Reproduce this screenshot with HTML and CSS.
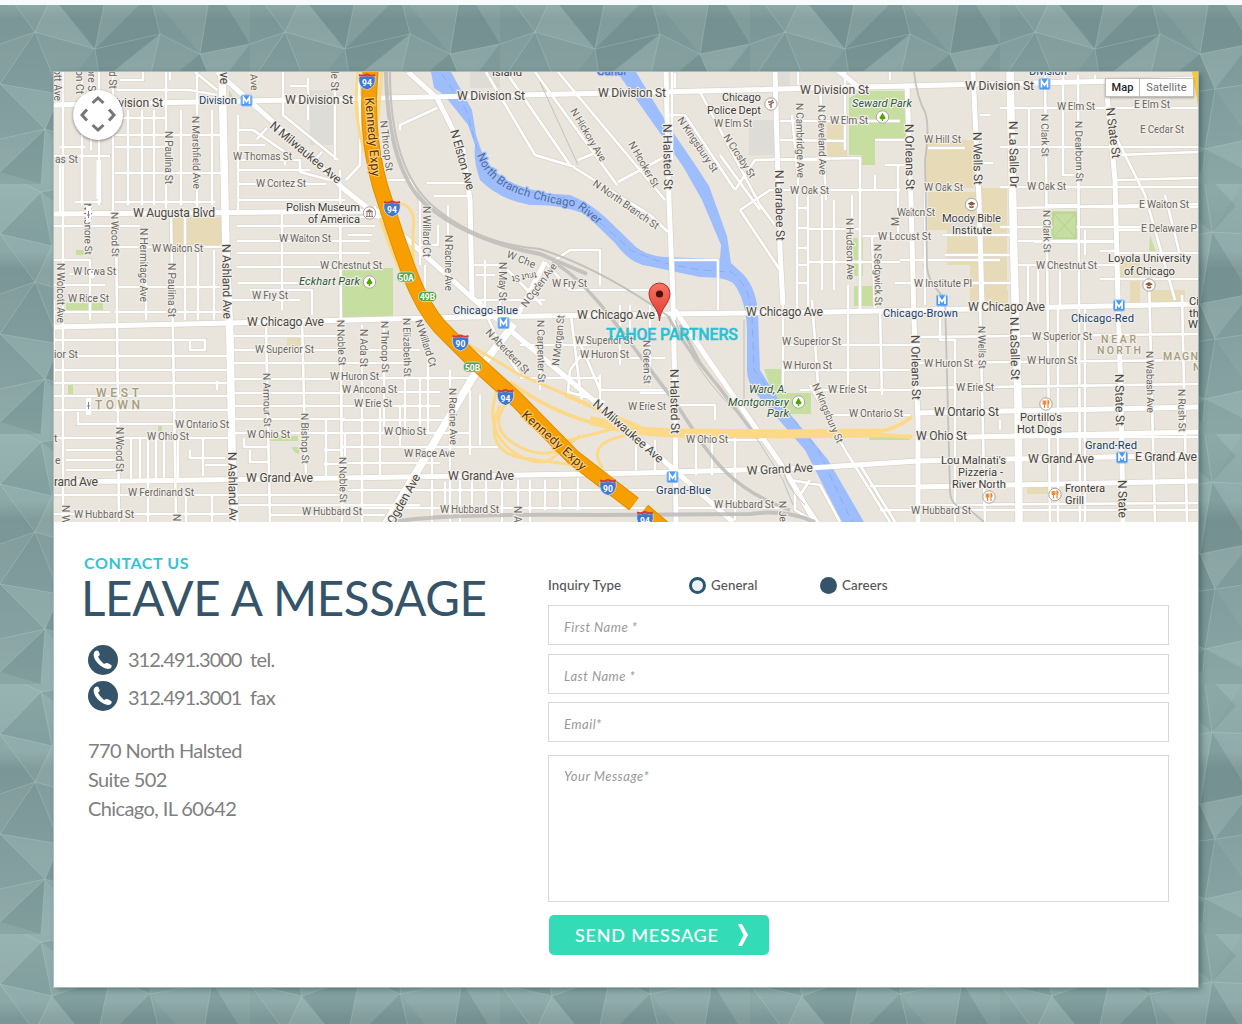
FILE: index.html
```html
<!DOCTYPE html>
<html lang="en">
<head>
<meta charset="utf-8">
<title>Contact Us</title>
<link rel="stylesheet" href="styles.css">
</head>
<body>
<svg class="backdrop" width="1242" height="1019" aria-hidden="true">
  <defs>
    <linearGradient id="wash" x1="0" y1="0" x2="0" y2="1"><stop offset="0" stop-color="#93b0af"/><stop offset=".27" stop-color="#8ba8a7"/><stop offset=".34" stop-color="#7b9696"/><stop offset=".7" stop-color="#829e9e"/><stop offset="1" stop-color="#8aa7a6"/></linearGradient>
    <pattern id="facets" width="250" height="250" patternUnits="userSpaceOnUse" patternTransform="translate(0 179)">
      <rect width="250" height="250" fill="url(#wash)"/>
      <g class="facet-light">
        <path d="M0-12 41 8 0 50ZM93 0 154 0 110 42ZM203-13 250-12 212 48ZM0 50 52 62 35 98ZM110 42 150 60 95 115ZM212 48 250 50 250 110ZM35 98 95 115 60 160ZM160 100 200 120 145 165ZM0 110 0 150 35 98ZM60 160 100 148 105 212ZM215 155 250 150 250 205ZM45 195 105 212 93 250ZM165 198 205 215 154 250ZM0 205 45 195 0 238ZM145 165 165 198 105 212ZM150 60 212 48 200 120Z"/>
      </g>
      <g class="facet-bright">
        <path d="M154 0 203-13 165 20ZM93 0 110 42 70 30ZM52 62 95 115 35 98ZM250 110 200 120 215 155ZM0 150 60 160 45 195ZM205 215 250 205 250 238ZM41 258 93 250 45 195ZM100 148 160 100 145 165Z"/>
      </g>
      <g class="facet-dark">
        <path d="M41 8 93 0 70 30ZM154 0 203-13 236 22 212 48ZM0 50 41 8 52 62ZM110 42 154 0 150 60ZM52 62 110 42 95 115ZM150 60 160 100 95 115ZM212 48 250 110 200 120ZM95 115 160 100 100 148ZM200 120 215 155 145 165ZM60 160 105 212 45 195ZM145 165 215 155 205 215 165 198ZM105 212 165 198 154 250ZM205 215 203 237 154 250ZM0 238 45 195 41 250Z"/>
      </g>
      <path class="facet-lines" d="M0-12 41 8 93 0 154 0 203-13 250-12M0 50 52 62 110 42 150 60 212 48 250 50M0 110 35 98 95 115 160 100 200 120 250 110M0 150 60 160 100 148 145 165 215 155 250 150M0 205 45 195 105 212 165 198 205 215 250 205M41 8 52 62 35 98 60 160 45 195 41 250M93 0 110 42 95 115 100 148 105 212 93 250M154 0 150 60 160 100 145 165 165 198 154 250M203-13 212 48 200 120 215 155 205 215 203 237M41 8 0 50 35 98 0 150 45 195 0 238"/>
    </pattern>
  </defs>
  <rect width="1242" height="1019" fill="url(#facets)"/>
</svg>

<main class="card">
  <section class="map">
    <svg class="map-canvas" viewBox="54 72 1144 450" width="1144" height="450" role="img" aria-label="Street map of Chicago around North Halsted Street">
      <defs>
        <g id="metro"><rect x="-5.5" y="-5.5" width="11" height="11" rx="1.5" fill="#4f97f0" stroke="#8dbdf7"/><path d="M-3 3.6V-3.2L0 1.2 3-3.2V3.6" fill="none" stroke="#fff" stroke-width="1.7"/></g>
        <g id="shield"><path d="M-8-6Q-4-4.500 0-6.500 4-4.500 8-6 10 5 0 8-10 5-8-6Z" fill="#3f78cf" stroke="#fff" stroke-width=".6"/><path d="M-8-7Q-4-5.500 0-7.500 4-5.500 8-7" fill="none" stroke="#cf3c45" stroke-width="2"/></g>
        <g id="exit"><rect x="-9" y="-5" width="18" height="10" rx="4.500" fill="#5ba348" stroke="#d9e8d0" stroke-width=".7"/></g>
        <g id="spot"><circle r="6.200" fill="#fff" stroke="#aaa59c"/></g>
        <g id="tree"><use href="#spot"/><path d="M0-4.200 3 .8Q3 2.500.7 2.300V4H-.7V2.300Q-3 2.500-3 .8Z" fill="#55a300"/></g>
        <g id="food"><use href="#spot"/><path d="M-2.800-3.500V0H-.2V-3.500M-1.500-3.500V4M2 4V-3.500Q4-2 2 .5" fill="none" stroke="#f0852d" stroke-width="1.200"/></g>
        <g id="school"><use href="#spot"/><path d="M-4-.8 0-3 4-.8 0 1.300ZM-2.200 1V3Q0 4.200 2.200 3V1L0 2.200Z" fill="#8b5a3c"/></g>

        <path id="minor-streets" d="M63 72V522M82 72V205M91 72V150M99 72V205M113 72V212M116 212 119 522M128 110V205M142 110V205M154 110V205M166 72V214M171 214 176 522M181 110V205M197 72V214M212 110V205M238 115V212M146 230V320M185 215V320M198 250V320M214 250V320M120 80H143V72M117 90H190L217 95M170 80V72M195 72 217 90M60 147H85M54 156H110M60 160V214M75 202H100V173M115 118H165M115 135H222M115 173H222M115 202H215M115 147H165M54 226H140M117 247H222M54 260H90V320M70 274H118M118 287H220M54 285H105M54 312H110M115 312H222M250 290H312V315M230 300H300M54 340H205V350H190V340M54 356H228M54 370H228M54 383H228M54 396H228M54 410H228M78 412V424H228M54 438H228M66 450H120M66 460H120M66 470H120M131 438V478M140 438V478M148 438V478M156 438V478M164 438V478M178 438V478M203 438V476M190 450V458H225M205 465H228M54 495H228M54 514H228M148 482V522M212 495V522M186 490V522M217 381V390M266 326 270 522M302 322 306 477M340 170 342 522M326 420V476M233 336H345M233 350H345M233 363H345M233 379H345M233 393H345M233 406H345M233 419H345M233 433H470M244 438V447H268M250 450V462H268M324 450H342M324 464H342M232 495H342M232 505H420M270 515H385M238 130H253L285 152V165M237 145H265M237 160H300V172L330 180H338M238 170H310M237 184H326M238 200H345M237 226H375M237 241H370M237 253H370M237 267H378M238 283H310M282 211V310M283 72V115L338 160M308 78V120M335 72V160M267 128 257 139M322 152 313 162M290 86H308M54 380V300M362 325V522M384 325V433M405 325V430M428 345V433M450 370V522M362 350H420M342 363H410M342 378H470M342 392H440M342 406H440M342 420H450M342 447H500M342 463H440M345 433V475M380 400V475M400 406V447M420 378V433M432 455V478M470 390V455M480 395V445M348 490H655M342 508H645M432 480V522M445 482V508M460 480V522M472 480V508M486 480V510M502 480V522M518 480V510M530 480V522M545 480V510M560 480V510M578 478V510M480 300 500 345 522 378H530M540 325V390M520 345H590M520 378H600M562 315V347M571 315 582 405M585 350 570 370 568 392 605 402M600 375V405M580 343 600 390H670M470 265H500V315M476 300H545M500 262 542 305M485 260V315M476 275H495M552 262 570 250H600V285M545 262 570 290H650M348 235H372M346 217H375V206M346 180 360 165V110L358 72M380 180H410L420 200V265M425 265V310M448 205V290M438 225V245H420M427 183H465M434 196H470M400 130V125L437 108M486 72 535 155 575 167M506 72 570 165 650 215 668 232M535 72 617 185M558 72 665 200M578 160 602 150M618 182 668 155M630 305V330M650 305V385M620 305V365M640 393H668M580 358H665M636 438V470M655 440V470M696 438V475M712 438V475M735 435V475M675 405H715V420M700 440H765M675 508H790M735 440V520M673 285V260H718V310M672 160V72M675 73V88M700 92 760 205 775 225M670 115H685L735 190M735 190 755 160 860 158V310M740 210 780 270M740 210 770 190H900M720 155 760 210M792 115 798 178V195M820 85 826 200M845 95V150M797 195V310M808 195V310M798 208H809M798 228H809M798 248H809M798 265H809M798 283H809M822 190V290M834 200V290M808 229H860M808 262H900M826 190V195M852 195V230M875 175V190M885 165H910M898 165V235M863 236H920M872 236 875 308M848 310V285M780 140 845 141M780 121H900M875 140H912M890 80V72M845 72V85M798 72V85M900 260H1000M895 283H1015M925 190V305M945 255H1015M943 235H1015M940 305V340L955 340V522M980 300 985 522M928 148H965M925 230V260M980 115H990M980 163H993M1000 108H1198M1000 147H1198M1000 187H1198M1000 227H1145M1015 265H1115M1015 208 1198 204M1018 241H1115M1034 242H1115M1045 72 1050 522M1078 75 1080 522M1029 108V185M1063 72V175H1075M1045 205H1078M1095 75V80M1110 125 1145 195 1175 300M1118 155 1198 152M1115 180 1198 178M1118 207H1198M1118 230H1198M1118 253H1198M1100 279H1198M1165 195 1180 255M1028 265V305M1038 265V305M1060 265V305M1085 230V255M1100 251H1115M1149 280 1155 522M1182 295 1187 522M783 305V390M812 300 818 385M848 305V390M880 310 882 395M782 345H920M782 370H920M800 390H920M830 415H910M810 385 845 450 890 522M860 465 895 522M870 486H918M880 510H1198M790 480 820 485 840 522M810 480 800 495 818 522M795 485V510L815 522M918 337 1198 334M918 363 1198 360M918 388 1198 384M918 437H1198M918 505 1198 503M1000 420V430M1058 307V522M1085 307V522"/>
        <path id="avenues" d="M54 105 290 100 660 92 1198 79M54 214 380 211M54 327 230 323 470 317 670 314 830 312 1198 304M54 482 340 478 640 473 810 468 918 461 1198 455M918 413 1198 407M968 437 1198 432M918 487 1198 481M666 72 669 200 673 300 675 400 676 522M775 72 780 250 783 305M907 85 911 200 914 320 918 420V522M973 72 979 200 982 305M1107 95 1115 180 1118 300 1121 400 1123 522M217 72 271 120 345 190 407 239 470 296 510 330 593 400 663 460 733 522M408 72 437 98 463 150 470 200 472 296M545 262 516 318M835 68 862 90M675 310 705 355 785 470 815 522"/>
        <path id="boulevards" d="M222 72 226 250 230 340 232 450 235 522M385 525 473 377 514 324M1010 72 1014 260 1018 400 1019 522"/>
        <path id="expressway" d="M371 66C367 110 369 145 380 186L393 226C408 270 420 310 448 335L473 360 517 400 573 457Q605 482 634 504M643 511 668 532"/>
      </defs>
      <rect x="54" y="72" width="1144" height="450" fill="#e9e5dc"/>

      <g class="land-tan">
        <path d="M173 217H222V246H173ZM926 140H974V188H926ZM980 188H1007V305H970V265H947V230H928V192H980ZM827 123H847V156H827ZM984 290H1008V304H984ZM1120 261H1140V305H1130V280H1120ZM1150 290H1185V303H1150ZM287 338H300V346H287ZM1027 487H1050V494H1027Z"/>
      </g>
      <g class="land-grey"><path d="M749 120H777V155H749ZM310 90H336V145H310ZM470 72H500V88H470ZM950 215H990V235H950ZM775 72H790V88H775Z"/></g>
      <g class="land-green">
        <path d="M341 268H393V317H341ZM849 98 862 91H908V138H875V165H862V155H849ZM853 238H863V276H853ZM854 286H875V306H854ZM1051 211H1078V240H1051ZM764 369H781V393H811V414H780ZM66 303H103V310H66ZM102 154H111V157H102ZM68 384H73V394H68ZM158 425H162V431H158ZM270 436H298V441H270ZM292 447H299V454Q293 453 292 447ZM76 250H84V255H76ZM1150 235 1156 252H1149ZM869 437H910V440H869ZM229 90 233 97H229Z"/>
      </g>

      <g class="casing">
        <use href="#minor-streets" stroke-width="4.200"/>
        <use href="#avenues" stroke-width="6.500"/>
        <use href="#boulevards" stroke-width="9"/>
      </g>

      <g class="water">
        <path d="M431 72H451L472 110 476 135 483 155Q492 174 515 184T570 195Q590 203 605 217L636 247Q648 256 664 257L720 259 721 245 702 200 684 168 660 133 617 72H636L668 125 694 163 709 186 727 236 731 263 744 275Q757 290 758 315L760 370 782 405 812 440 828 460 864 522H842L805 450 760 398Q747 385 747 370V330Q746 300 734 284 727 277 700 277L648 266Q630 264 615 243L585 214Q560 204 530 205 500 200 480 180 473 160 475 145L468 125 449 101 440 92 434 88Z"/>
        <path class="channel" d="M442 74 466 110 477 148Q490 176 520 190L575 200 632 251 664 263 700 270 731 272Q750 285 752 315L754 370 790 415 818 450 852 522"/>
      </g>

      <g class="streets">
        <use href="#minor-streets" stroke-width="2.600"/>
        <use href="#avenues" stroke-width="5"/>
        <use href="#boulevards" stroke-width="7.600"/>
      </g>
      <path d="M1053 213V238H1076V213ZM1053 213 1076 238M1076 213 1053 238" stroke="#b2ce91" fill="#c6dfa0"/>

      <g class="rails">
        <path stroke-width="4" d="M386 72Q388 175 430 208T540 254L587 274"/>
        <path stroke-width="2" d="M390 72Q390 170 434 207T540 249Q600 268 668 316"/>
        <path stroke-width="3.500" d="M552 262C590 280 630 345 675 402 710 455 725 487 790 510"/>
        <path stroke-width="4" d="M385 524Q420 513 600 515L750 514Q785 509 815 522"/>
        <path stroke-width="3" d="M668 316Q685 348 720 388L755 435M680 325 700 363 740 415"/>
        <path stroke-width="1" d="M675 320Q695 375 745 420L783 480 793 505M744 320V400M540 82 578 165M785 465Q780 480 805 505"/>
        <path stroke-width="1.800" d="M914 72Q917 98 925 112 930 126 925 160L927 266Q928 283 945 298L950 490Q950 508 970 510L984 522"/>
      </g>

      <g class="ramps">
        <path stroke-width="3" d="M358 72Q351 122 370 165M382 72 378 120M390 202Q418 202 413 230V262M380 218Q395 265 415 300M466 343 520 375 590 405M440 335 495 375Q497 390 512 397M500 382Q480 430 515 453T565 441L625 426M505 405Q487 430 520 447T580 435M500 405Q480 455 530 459L574 465M603 468Q582 440 640 433"/>
        <path stroke-width="9" d="M590 420Q630 432 670 433L780 434 880 433"/>
        <path stroke-width="4" d="M565 395Q610 415 640 427M510 382Q560 420 625 430M870 434 912 437M875 432Q895 430 912 417"/>
      </g>
      <path d="M1192 72H1198V105Z" fill="#f7c938"/>
      <g fill="none"><use href="#expressway" stroke="#e08f00" stroke-width="16"/><use href="#expressway" stroke="#f79f00" stroke-width="14"/></g>

      <g class="label minor">
        <text x="233" y="160" textLength="59">W Thomas St</text>
        <text x="256" y="187" textLength="50">W Cortez St</text>
        <text x="152" y="252" textLength="51">W Walton St</text>
        <text x="279" y="242" textLength="52">W Walton St</text>
        <text x="320" y="269" textLength="62">W Chestnut St</text>
        <text x="73" y="275" textLength="43">W Iowa St</text>
        <text x="68" y="302" textLength="41">W Rice St</text>
        <text x="55" y="163">as St</text>
        <text x="252" y="299" textLength="36">W Fry St</text>
        <text x="54" y="358">ior St</text>
        <text x="255" y="353" textLength="59">W Superior St</text>
        <text x="175" y="428" textLength="54">W Ontario St</text>
        <text x="147" y="440" textLength="42">W Ohio St</text>
        <text x="247" y="438" textLength="43">W Ohio St</text>
        <text x="128" y="496" textLength="66">W Ferdinand St</text>
        <text x="74" y="518" textLength="60">W Hubbard St</text>
        <text x="302" y="515" textLength="60">W Hubbard St</text>
        <text x="55" y="464">e</text><text x="54" y="442">t</text>
        <text x="552" y="287" textLength="35">W Fry St</text>
        <text x="575" y="344" textLength="58">W Superior St</text>
        <text x="580" y="358" textLength="49">W Huron St</text>
        <text x="330" y="380" textLength="49">W Huron St</text>
        <text x="342" y="393" textLength="55">W Ancona St</text>
        <text x="354" y="407" textLength="38">W Erie St</text>
        <text x="384" y="435" textLength="42">W Ohio St</text>
        <text x="404" y="457" textLength="51">W Race Ave</text>
        <text x="440" y="513" textLength="59">W Hubbard St</text>
        <text x="628" y="410" textLength="38">W Erie St</text>
        <text x="686" y="443" textLength="42">W Ohio St</text>
        <text x="782" y="345" textLength="59">W Superior St</text>
        <text x="783" y="369" textLength="49">W Huron St</text>
        <text x="828" y="393" textLength="39">W Erie St</text>
        <text x="849" y="417" textLength="54">W Ontario St</text>
        <text x="714" y="508" textLength="60">W Hubbard St</text>
        <text x="714" y="127" textLength="38">W Elm St</text>
        <text x="830" y="124" textLength="38">W Elm St</text>
        <text x="790" y="194" textLength="39">W Oak St</text>
        <text x="897" y="216" textLength="38">Walton St</text>
        <text x="878" y="240" textLength="53">W Locust St</text>
        <text x="1057" y="110" textLength="38">W Elm St</text>
        <text x="1134" y="108" textLength="36">E Elm St</text>
        <text x="1140" y="133" textLength="44">E Cedar St</text>
        <text x="924" y="143" textLength="37">W Hill St</text>
        <text x="924" y="191" textLength="39">W Oak St</text>
        <text x="1027" y="190" textLength="39">W Oak St</text>
        <text x="1139" y="208" textLength="50">E Walton St</text>
        <text x="1141" y="232" textLength="56">E Delaware P</text>
        <text x="1036" y="269" textLength="61">W Chestnut St</text>
        <text x="914" y="287" textLength="58">W Institute Pl</text>
        <text x="1032" y="340" textLength="60">W Superior St</text>
        <text x="924" y="367" textLength="49">W Huron St</text>
        <text x="1027" y="364" textLength="50">W Huron St</text>
        <text x="956" y="391" textLength="38">W Erie St</text>
        <text x="911" y="514" textLength="60">W Hubbard St</text>

        <text transform="translate(165 131)rotate(90)" textLength="53">N Paulina St</text>
        <text transform="translate(192 116)rotate(89)" textLength="73">N Marshfield Ave</text>
        <text transform="translate(140 228)rotate(90)" textLength="74">N Hermitage Ave</text>
        <text transform="translate(111 212)rotate(89)" textLength="45">N Wood St</text>
        <text transform="translate(168 263)rotate(90)" textLength="54">N Paulina St</text>
        <text transform="translate(57 263)rotate(90)" textLength="60">N Wolcott Ave</text>
        <text transform="translate(84 203)rotate(89)" textLength="52">N Honore St</text>
        <text transform="translate(54 69)rotate(90)">ott Ave</text>
        <text transform="translate(76 70)rotate(90)">on Ct</text>
        <text transform="translate(88 68)rotate(90)">ore St</text>
        <text transform="translate(109 71)rotate(90)">d St</text>
        <text transform="translate(250 74)rotate(86)">Ave</text>
        <text transform="translate(331 71)rotate(90)">le St</text>
        <text transform="translate(337 320)rotate(88)" textLength="46">N Noble St</text>
        <text transform="translate(263 373)rotate(89)" textLength="54">N Armour St</text>
        <text transform="translate(301 413)rotate(89)" textLength="51">N Bishop St</text>
        <text transform="translate(116 427)rotate(90)" textLength="45">N Wood St</text>
        <text transform="translate(339 457)rotate(89)" textLength="46">N Noble St</text>
        <text transform="translate(62 505)rotate(90)">N W</text><text transform="translate(173 514)rotate(90)">N</text>
        <text transform="translate(380 121)rotate(83)" textLength="51">N Throop St</text>
        <text transform="translate(423 206)rotate(90)" textLength="51">N Willard Ct</text>
        <text transform="translate(445 235)rotate(90)" textLength="56">N Racine Ave</text>
        <text transform="translate(499 262)rotate(90)" textLength="39">N May St</text>
        <text transform="translate(570 111)rotate(59)" textLength="60">N Hickory Ave</text>
        <text transform="translate(628 144)rotate(60)" textLength="51">N Hooker St</text>
        <text transform="translate(592 185)rotate(35)" textLength="78">N North Branch St</text>
        <text transform="translate(506 257)rotate(22)" textLength="30">W Che</text>
        <text transform="translate(536 272)rotate(170)" textLength="25" class="turned">tnut St</text>
        <text transform="translate(526 308)rotate(-53)" textLength="52">N Ogden Ave</text>
        <text transform="translate(485 333)rotate(46)" textLength="58">N Aberdeen St</text>
        <text transform="translate(537 320)rotate(89)" textLength="63">N Carpenter St</text>
        <text transform="translate(559 366)rotate(-84)" textLength="51">N Morgan St</text>
        <text transform="translate(360 329)rotate(90)" textLength="38">N Ada St</text>
        <text transform="translate(381 321)rotate(89)" textLength="52">N Throop St</text>
        <text transform="translate(403 318)rotate(89)" textLength="59">N Elizabeth St</text>
        <text transform="translate(415 321)rotate(72)" textLength="49">N Willard Ct</text>
        <text transform="translate(449 388)rotate(89)" textLength="57">N Racine Ave</text>
        <text transform="translate(514 506)rotate(90)">N A</text>
        <text transform="translate(643 340)rotate(89)" textLength="44">N Green St</text>
        <text transform="translate(812 385)rotate(67)" textLength="64">N Kingsbury St</text>
        <text transform="translate(779 501)rotate(88)">N Je</text>
        <text transform="translate(677 120)rotate(56)" textLength="64">N Kingsbury St</text>
        <text transform="translate(723 137)rotate(57)" textLength="50">N Crosby St</text>
        <text transform="translate(796 103)rotate(89)" textLength="75">N Cambridge Ave</text>
        <text transform="translate(818 105)rotate(89)" textLength="70">N Cleveland Ave</text>
        <text transform="translate(846 218)rotate(89)" textLength="62">N Hudson Ave</text>
        <text transform="translate(874 244)rotate(89)" textLength="62">N Sedgwick St</text>
        <text transform="translate(899 226)rotate(-90)">M</text>
        <text transform="translate(1041 114)rotate(89)" textLength="43">N Clark St</text>
        <text transform="translate(1075 121)rotate(89)" textLength="61">N Dearborn St</text>
        <text transform="translate(1043 210)rotate(89)" textLength="43">N Clark St</text>
        <text transform="translate(978 326)rotate(89)" textLength="43">N Wells St</text>
        <text transform="translate(1146 351)rotate(89)" textLength="62">N Wabash Ave</text>
        <text transform="translate(1178 389)rotate(89)" textLength="43">N Rush St</text>
      </g>

      <g class="label major">
        <text x="94" y="107" textLength="69">W Division St</text>
        <text x="285" y="104" textLength="68">W Division St</text>
        <text x="457" y="100" textLength="68">W Division St</text>
        <text x="598" y="97" textLength="68">W Division St</text>
        <text x="800" y="94" textLength="69">W Division St</text>
        <text x="965" y="90" textLength="69">W Division St</text>
        <text x="133" y="217" textLength="82">W Augusta Blvd</text>
        <text x="247" y="326" textLength="77">W Chicago Ave</text>
        <text x="577" y="319" textLength="78">W Chicago Ave</text>
        <text x="746" y="316" textLength="77">W Chicago Ave</text>
        <text x="968" y="311" textLength="77">W Chicago Ave</text>
        <text x="246" y="482" textLength="67">W Grand Ave</text>
        <text x="54" y="486" textLength="44">rand Ave</text>
        <text x="448" y="480" textLength="66">W Grand Ave</text>
        <text transform="translate(747 475)rotate(-3)" textLength="66">W Grand Ave</text>
        <text x="1028" y="463" textLength="66">W Grand Ave</text>
        <text x="1135" y="461" textLength="62">E Grand Ave</text>
        <text x="934" y="416" textLength="65">W Ontario St</text>
        <text x="916" y="440" textLength="51">W Ohio St</text>
        <text transform="translate(269 127)rotate(40)" textLength="89">N Milwaukee Ave</text>
        <text transform="translate(592 405)rotate(41)" textLength="89">N Milwaukee Ave</text>
        <text transform="translate(222 244)rotate(89)" textLength="75">N Ashland Ave</text>
        <text transform="translate(228 452)rotate(89)" textLength="69">N Ashland Av</text>
        <text transform="translate(220 72)rotate(90)">ve</text>
        <text transform="translate(450 131)rotate(74)" textLength="62">N Elston Ave</text>
        <text transform="translate(394 525)rotate(-61)" textLength="55">Ogden Ave</text>
        <text transform="translate(663 124)rotate(89)" textLength="66">N Halsted St</text>
        <text transform="translate(670 369)rotate(89)" textLength="65">N Halsted St</text>
        <text transform="translate(775 170)rotate(89)" textLength="71">N Larrabee St</text>
        <text transform="translate(905 124)rotate(89)" textLength="66">N Orleans St</text>
        <text transform="translate(911 335)rotate(89)" textLength="65">N Orleans St</text>
        <text transform="translate(973 132)rotate(89)" textLength="53">N Wells St</text>
        <text transform="translate(1009 121)rotate(89)" textLength="67">N La Salle Dr</text>
        <text transform="translate(1010 317)rotate(89)" textLength="63">N LaSalle St</text>
        <text transform="translate(1106 108)rotate(83)" textLength="51">N State St</text>
        <text transform="translate(1115 374)rotate(89)" textLength="52">N State St</text>
        <text transform="translate(1118 480)rotate(89)" textLength="38">N State</text>
      </g>

      <g class="label expy">
        <text transform="translate(365 98)rotate(85)" textLength="79">Kennedy Expy</text>
        <text transform="translate(521 416)rotate(42)" textLength="82">Kennedy Expy</text>
      </g>
      <g class="label river">
        <path id="river-line" d="M477 155Q487 185 525 196T575 206L606 231" fill="none" stroke="none"/>
        <text textLength="146"><textPath href="#river-line">North Branch Chicago River</textPath></text>
        <text x="597" y="75">Canal</text>
      </g>

      <g class="label place">
        <text x="286" y="211" textLength="74">Polish Museum</text><text x="308" y="223" textLength="52">of America</text>
        <text x="722" y="101" textLength="39">Chicago</text><text x="707" y="114" textLength="54">Police Dept</text>
        <text x="942" y="222" textLength="59">Moody Bible</text><text x="952" y="234" textLength="40">Institute</text>
        <text x="1108" y="262" textLength="83">Loyola University</text><text x="1124" y="275" textLength="51">of Chicago</text>
        <text x="1020" y="421" textLength="42">Portillo's</text><text x="1017" y="433" textLength="45">Hot Dogs</text>
        <text x="941" y="464" textLength="65">Lou Malnati's</text><text x="958" y="476" textLength="45">Pizzeria -</text><text x="952" y="488" textLength="54">River North</text>
        <text x="1065" y="492" textLength="40">Frontera</text><text x="1065" y="504" textLength="19">Grill</text>
        <text x="1189" y="305">Ci</text><text x="1189" y="317">th</text><text x="1188" y="328">W</text>
        <text x="492" y="76">Island</text>
      </g>
      <g class="label park">
        <text x="299" y="285" textLength="61">Eckhart Park</text>
        <text x="852" y="107" textLength="60">Seward Park</text>
        <text x="749" y="393" textLength="38">Ward, A.</text><text x="728" y="406" textLength="61">Montgomery</text><text x="767" y="417" textLength="22">Park</text>
      </g>
      <g class="label station">
        <text x="199" y="104" textLength="38">Division</text><text x="453" y="314" textLength="65">Chicago-Blue</text>
        <text x="656" y="494" textLength="55">Grand-Blue</text><text x="883" y="317" textLength="75">Chicago-Brown</text>
        <text x="1071" y="322" textLength="63">Chicago-Red</text><text x="1085" y="449" textLength="52">Grand-Red</text>
        <text x="1029" y="75" textLength="38">Division</text>
      </g>
      <g class="label district">
        <text x="96" y="397" textLength="43">WEST</text><text x="95" y="409" textLength="45">TOWN</text>
        <text class="small" x="1101" y="343" textLength="35">NEAR</text><text class="small" x="1097" y="354" textLength="44">NORTH</text>
        <text class="small" x="1163" y="360" textLength="35">MAGN</text><text class="small" x="1193" y="371">N</text>
      </g>

      <use href="#metro" x="246.500" y="100.500"/><use href="#metro" x="503.500" y="323"/><use href="#metro" x="672.500" y="477"/><use href="#metro" x="942" y="300.500"/><use href="#metro" x="1119" y="305.500"/><use href="#metro" x="1122" y="457.500"/><use href="#metro" x="1044.500" y="84"/>
      <use href="#tree" x="369.500" y="282"/><use href="#tree" x="882.500" y="117"/><use href="#tree" x="798.500" y="402"/>
      <use href="#food" x="1046" y="404"/><use href="#food" x="989" y="497"/><use href="#food" x="1055" y="494.500"/>
      <use href="#school" x="971.500" y="204.500"/><use href="#school" x="1149" y="285"/>
      <use href="#spot" x="369.500" y="213"/><path d="M366 212 369.500 209.500 373 212ZM367 213V216M369.500 213V216M372 213V216M366 216.500H373" stroke="#8d7464" fill="#8d7464" stroke-width=".9"/>
      <use href="#spot" x="771" y="104"/><path d="M768 102H771L773 100M769 105 774 102M771 104V108" stroke="#8d6450" fill="none" stroke-width="1.400"/>
      <use href="#shield" x="367" y="82"/><use href="#shield" x="392" y="209"/><use href="#shield" x="460.500" y="343"/><use href="#shield" x="505.500" y="397.500"/><use href="#shield" x="608" y="487.500"/><use href="#shield" x="645" y="519.500"/>
      <use href="#exit" x="406" y="277"/><use href="#exit" x="427.500" y="296.500"/><use href="#exit" x="472.500" y="367"/>
      <g class="badge"><text x="367" y="86">94</text><text x="392" y="213">94</text><text x="460.500" y="347">90</text><text x="505.500" y="401.500">94</text><text x="608" y="491.500">90</text><text x="645" y="523.500">94</text><text x="406" y="280.500">50A</text><text x="427.500" y="300">49B</text><text x="472.500" y="370.500">50B</text></g>

      <g class="worn"><path d="M96.500 160H101V199H96.500ZM86 206H91V222H86ZM89 270H94V278H89ZM86 398H91V415H86Z" fill="#fff"/><path d="M88.500 211V218M87 215H90M91 272H93M88.500 402V409M87 406H90" stroke="#7d8297" fill="none"/></g>

      <defs><linearGradient id="pin-fill" x1="0" y1="0" x2="0" y2="1"><stop offset="0" stop-color="#fb7064"/><stop offset="1" stop-color="#dd3c30"/></linearGradient></defs>
      <path d="M659.500 321C659 308 649 304 649 293.500A10.500 10.500 0 0 1 670 293.500C670 304 660 308 659.500 321Z" fill="url(#pin-fill)" stroke="#ab3027"/>
      <circle cx="659.500" cy="294" r="3.600" fill="#49120e"/>
      <text class="partner" x="606" y="340" textLength="132">TAHOE PARTNERS</text>
    </svg>

    <button class="pan" aria-label="Pan map">
      <svg viewBox="0 0 50 50" width="50" height="50"><path d="M19.500 13 25 8 30.500 13M19.500 35 25 40 30.500 35M14 19.500 9 25 14 30.500M36 19.500 41 25 36 30.500"/></svg>
    </button>
    <div class="map-type"><span class="active">Map</span><span>Satellite</span></div>
  </section>

  <section class="contact">
    <div class="details">
      <p class="eyebrow">CONTACT US</p>
      <h1>LEAVE A MESSAGE</h1>
      <ul class="phones">
        <li><svg class="phone" viewBox="0 0 30 30"><circle cx="15" cy="15" r="15"/><path d="M7 6.200Q9.500 4.400 10.700 6.600L11.800 9.600Q11.500 11.300 10 11.500 11.500 15.500 16 19 18.800 17 20.600 18.600L23.500 20.200Q24.400 21.800 22.700 23.300 18.500 25.400 12.500 20.800 5.500 15 5.600 9.500 5.700 7.500 7 6.200Z"/></svg><span class="number">312.491.3000</span><span>tel.</span></li>
        <li><svg class="phone" viewBox="0 0 30 30"><circle cx="15" cy="15" r="15"/><path d="M7 6.200Q9.500 4.400 10.700 6.600L11.800 9.600Q11.500 11.300 10 11.500 11.500 15.500 16 19 18.800 17 20.600 18.600L23.500 20.200Q24.400 21.800 22.700 23.300 18.500 25.400 12.500 20.800 5.500 15 5.600 9.500 5.700 7.500 7 6.200Z"/></svg><span class="number">312.491.3001</span><span>fax</span></li>
      </ul>
      <address>770 North Halsted<br>Suite 502<br>Chicago, IL 60642</address>
    </div>

    <form class="message">
      <div class="inquiry">
        <span class="inquiry-title">Inquiry Type</span>
        <label class="choice general"><i class="dot hollow"></i>General</label>
        <label class="choice"><i class="dot"></i>Careers</label>
      </div>
      <input class="field" type="text" placeholder="First Name *">
      <input class="field" type="text" placeholder="Last Name *">
      <input class="field" type="text" placeholder="Email*">
      <textarea class="field area" placeholder="Your Message*"></textarea>
      <button class="send" type="button"><span>SEND MESSAGE</span><svg viewBox="0 0 10 22" width="10" height="22"><path d="M0 0H4L10 11 4 22H0L5.500 11Z"/></svg></button>
    </form>
  </section>
</main>
</body>
</html>
```
FILE: styles.css
```css
* { box-sizing: border-box; }

body {
  position: relative;
  margin: 0;
  height: 1024px;
  overflow: hidden;
  padding: 72px 44px 37px 54px;
  background: #f7fbfb;
  font-family: Lato, "Liberation Sans", sans-serif;
  color: #808080;
}

/* low-poly backdrop */
.backdrop { position: absolute; top: 5px; left: 0; z-index: -1; display: block; }
.facet-light { fill: #b4cccb; fill-opacity: .12; }
.facet-bright { fill: #cfe5e2; fill-opacity: .16; }
.facet-dark { fill: #536f70; fill-opacity: .17; }
.facet-lines { fill: none; stroke: #c6dcda; stroke-opacity: .3; stroke-width: .8; }

.card {
  height: 915px;
  background: #fff;
  box-shadow: 0 0 0 1px rgba(190, 200, 200, .75), 3px 2px 6px rgba(20, 45, 48, .45);
}

/* map */
.map { position: relative; height: 450px; overflow: hidden; }
.map-canvas { display: block; }
.land-tan { fill: #e7dab6; }
.land-grey { fill: #dedcd7; }
.land-green { fill: #c6dfa0; }
.casing { fill: none; stroke: #dad5cb; }
.streets { fill: none; stroke: #fff; stroke-linejoin: round; }
.water { fill: #9dbdfd; }
.channel { fill: none; stroke: #8bacf3; stroke-dasharray: 8 5; }
.rails { fill: none; stroke: #bdbcb9; opacity: .85; }
.ramps { fill: none; stroke: #fcd989; }

.label { font-family: Roboto, sans-serif; paint-order: stroke; stroke: #f1eee8; stroke-width: 2.4px; stroke-linejoin: round; }
.minor { font-size: 10.3px; fill: #696764; }
.major { font-size: 12.2px; fill: #4b4946; }
.turned { font-size: 9px; }
.expy { font-size: 12.5px; fill: #573509; stroke: #ffcc70; }
.river { font-size: 11.5px; fill: #4e6a9c; stroke: #9dbdfd; }
.place { font-size: 11.2px; fill: #3d3d3d; }
.park { font-size: 11.2px; font-style: italic; fill: #295940; }
.station { font-size: 11.2px; fill: #173f70; }
.district { font-size: 12px; font-weight: 500; fill: #a59d80; }
.small { font-size: 10.5px; }
.badge { font: bold 8.5px Roboto, sans-serif; fill: #fff; text-anchor: middle; }
.partner { font: 500 16px Roboto, sans-serif; fill: #2ac0d5; stroke: #2ac0d5; stroke-width: .4px; }

.pan {
  position: absolute;
  left: 19px;
  top: 18px;
  width: 50px;
  height: 50px;
  padding: 0;
  border: 0;
  border-radius: 50%;
  background: #fff;
  box-shadow: 0 1px 3px rgba(0, 0, 0, .45);
}
.pan svg { display: block; fill: none; stroke: #77777a; stroke-width: 3; }

.map-type {
  position: absolute;
  left: 1051px;
  top: 6px;
  display: flex;
  height: 19px;
  background: #fff;
  border: 1px solid #c3c0bb;
  box-shadow: 0 1px 2px rgba(0, 0, 0, .3);
  font: 11px/18px Roboto, sans-serif;
  letter-spacing: .1px;
  color: #6c6c6c;
}
.map-type span { width: 53px; text-align: center; }
.map-type .active { width: 34px; border-right: 1px solid #c3c0bb; font-weight: 500; color: #222; }

/* contact section */
.contact { display: grid; grid-template-columns: 464px 621px; padding: 31px 0 0 30px; }

.eyebrow { margin: 0; font-size: 16px; line-height: 20px; font-weight: 700; letter-spacing: .6px; color: #33c4d3; }
h1 { margin: 0 0 0 -3px; font-size: 47.5px; line-height: 50px; font-weight: 400; letter-spacing: -.3px; color: #35546a; white-space: nowrap; }

.phones { display: grid; gap: 6px; margin: 22px 0 0 4px; padding: 0; list-style: none; }
.phones li { display: flex; align-items: center; height: 30px; font-size: 20px; letter-spacing: -.6px; }
.phones span { padding-bottom: 2px; }
.phones li + li span { padding: 2px 0 0; }
.phone { width: 30px; height: 30px; margin-right: 10px; fill: #fff; }
.phone circle { fill: #35546a; }
.phones .number { width: 122px; letter-spacing: -1px; }

address { margin: 25px 0 0 4px; font-size: 20px; line-height: 29px; font-style: normal; letter-spacing: -.6px; }

.message { display: flex; flex-direction: column; }
.inquiry { display: flex; align-items: center; height: 18px; margin: 23px 0 11px; font-size: 13.3px; font-weight: 500; letter-spacing: .12px; color: #555; }
.inquiry-title { width: 141px; }
.choice { display: flex; align-items: center; gap: 5px; }
.general { width: 131px; }
.dot { width: 17px; height: 17px; border-radius: 50%; background: #35546a; }
.hollow { border: 3px solid #285871; background: #edf1f2; }

.field {
  width: 621px;
  height: 40px;
  margin: 0 0 9px;
  padding: 4px 15px 0;
  border: 1px solid #d8d8d8;
  border-radius: 0;
  outline: 0;
  background: #fff;
  font: italic 13px Lato, sans-serif;
  letter-spacing: .5px;
  resize: none;
}
.field:nth-of-type(2) { margin-bottom: 8px; padding-top: 3px; }
.field:nth-of-type(3) { margin-bottom: 13px; padding-top: 3px; }
.field::placeholder { color: #999; opacity: 1; }
.area { height: 147px; margin-bottom: 13px; padding-top: 12px; }

.send {
  display: flex;
  align-items: center;
  gap: 19px;
  width: 220px;
  height: 40px;
  margin-left: 1px;
  padding: 0 0 1px 26px;
  border: 0;
  border-radius: 5px;
  background: #33dcb7;
  color: #fff;
  font: 500 18px Lato, sans-serif;
  letter-spacing: .8px;
}
.send svg { fill: #fff; }
```
